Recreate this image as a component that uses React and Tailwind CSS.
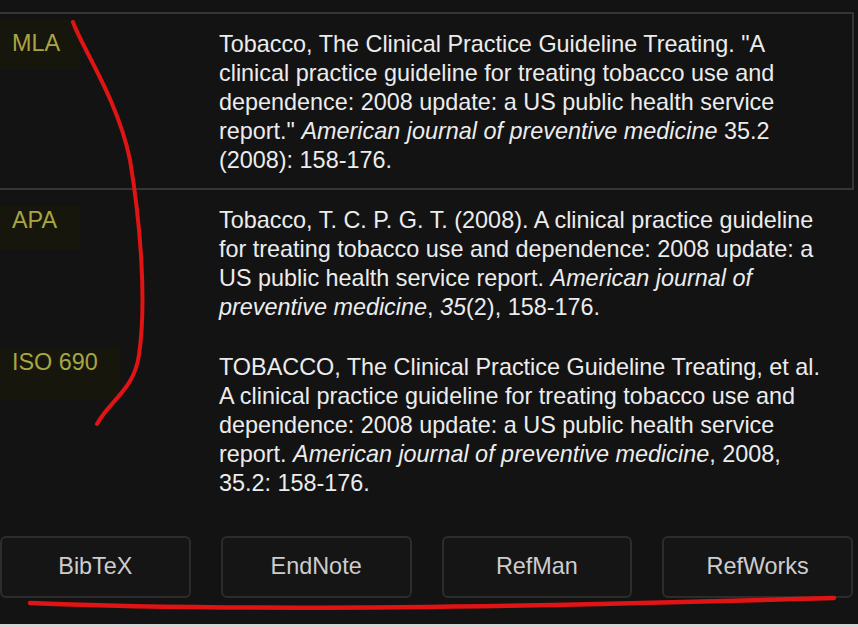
import React from 'react';

const citations = [
    {
        label: 'MLA',
        labelBox: 'w-[80px] h-[50px] pt-[9px] pl-[12px] -mt-[10px]',
        boxed: true,
        body: (
            <>
                Tobacco, The Clinical Practice Guideline Treating. "A clinical practice guideline for treating tobacco use and dependence: 2008 update: a US public health service report." <i>American journal of preventive medicine</i> 35.2 (2008): 158-176.
            </>
        ),
    },
    {
        label: 'APA',
        labelBox: 'w-[80px] h-[44px] pt-0 pl-[12px]',
        body: (
            <>
                Tobacco, T. C. P. G. T. (2008). A clinical practice guideline for treating tobacco use and dependence: 2008 update: a US public health service report. <i>American journal of preventive medicine</i>, <i>35</i>(2), 158-176.
            </>
        ),
    },
    {
        label: 'ISO 690',
        labelBox: 'w-[120px] h-[52px] pt-[1px] pl-[12px] -mt-[6px]',
        body: (
            <>
                TOBACCO, The Clinical Practice Guideline Treating, et al. A clinical practice guideline for treating tobacco use and dependence: 2008 update: a US public health service report. <i>American journal of preventive medicine</i>, 2008, 35.2: 158-176.
            </>
        ),
    },
];

const exportsList = ['BibTeX', 'EndNote', 'RefMan', 'RefWorks'];

function CitationRow({ item }) {
    return (
        <div
            className={`flex w-[854px] pt-[16px] ${item.boxed ? 'pb-[13px] border-y-2 border-r-2 border-[#353535]' : 'pb-[15px]'}`}
        >
            <div className="w-[219px] shrink-0">
                <div className={`${item.labelBox} bg-[#16160d] text-[#a8a543] leading-[29px]`}>
                    {item.label}
                </div>
            </div>
            <p className="w-[616px] leading-[29px] text-[#ececec]">{item.body}</p>
        </div>
    );
}

export default function App() {
    return (
        <div
            className="relative flex flex-col h-[627px] w-[858px] overflow-hidden bg-[#131313] text-[23.4px]"
            style={{ fontFamily: '"Liberation Sans", Arial, sans-serif' }}
        >
            <div className="h-[12px]" />
            {citations.map((c) => (
                <CitationRow key={c.label} item={c} />
            ))}

            {/* export buttons */}
            <div className="grid grid-cols-4 gap-x-[30px] w-[853px] mt-[23px]">
                {exportsList.map((name) => (
                    <button
                        key={name}
                        type="button"
                        className="h-[62px] rounded-[6px] border-2 border-[#2c2c2c] bg-[#151515] text-[#cdcdcd]"
                    >
                        {name}
                    </button>
                ))}
            </div>

            <div className="flex-1" />
            <div className="h-[3px] bg-[#d6d6d6]" />

            {/* red pen marks over the screenshot */}
            <svg className="absolute inset-0 pointer-events-none" width="858" height="627">
                <path
                    d="M73 22 C 82 48, 118 100, 130 160 C 140 220, 147 300, 139 355 C 134 390, 110 400, 97 424"
                    fill="none"
                    stroke="#e01414"
                    strokeWidth="4"
                    strokeLinecap="round"
                />
                <path
                    d="M30 603 C 200 610, 420 608, 600 604 C 700 602, 760 600, 834 598"
                    fill="none"
                    stroke="#e01414"
                    strokeWidth="4.5"
                    strokeLinecap="round"
                />
            </svg>
        </div>
    );
}
